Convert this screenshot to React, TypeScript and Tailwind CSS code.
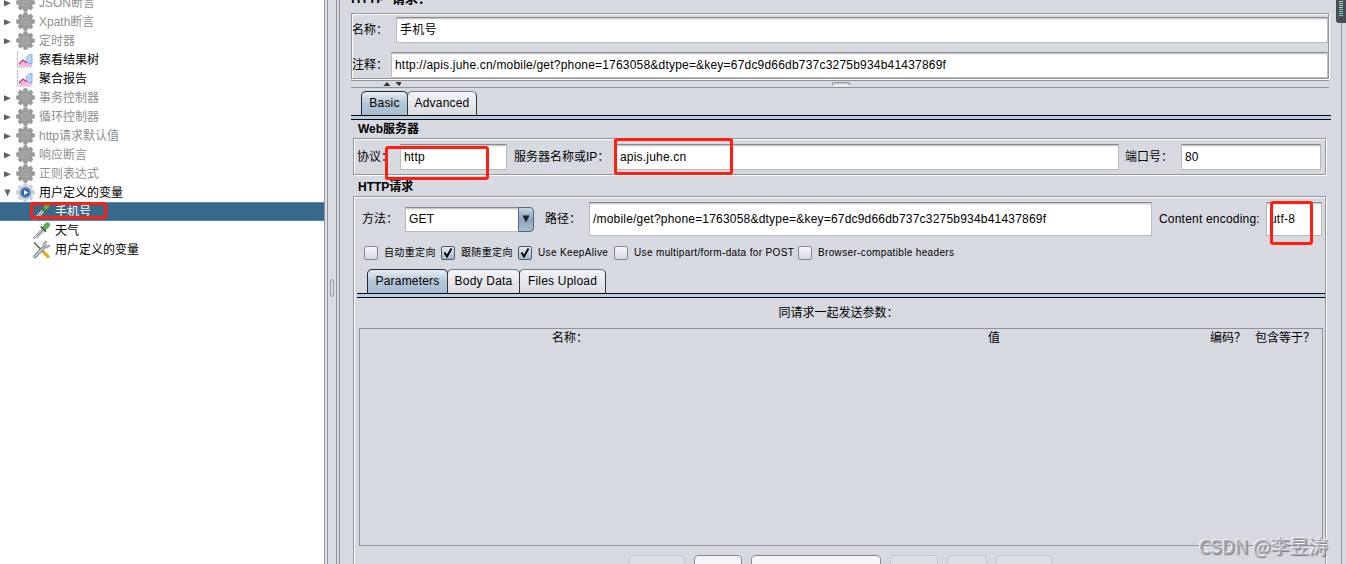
import React from "react";
import clsx from "clsx";

type IconKind = "gear" | "gearActive" | "chart" | "dropper" | "tools";

interface TreeItem {
  label: string;
  icon: IconKind;
  level: number;
  arrow?: "right" | "down";
  disabled?: boolean;
  selected?: boolean;
}

const treeItems: TreeItem[] = [
  { label: "JSON断言", icon: "gear", level: 0, arrow: "right", disabled: true },
  { label: "Xpath断言", icon: "gear", level: 0, arrow: "right", disabled: true },
  { label: "定时器", icon: "gear", level: 0, arrow: "right", disabled: true },
  { label: "察看结果树", icon: "chart", level: 0 },
  { label: "聚合报告", icon: "chart", level: 0 },
  { label: "事务控制器", icon: "gear", level: 0, arrow: "right", disabled: true },
  { label: "循环控制器", icon: "gear", level: 0, arrow: "right", disabled: true },
  { label: "http请求默认值", icon: "gear", level: 0, arrow: "right", disabled: true },
  { label: "响应断言", icon: "gear", level: 0, arrow: "right", disabled: true },
  { label: "正则表达式", icon: "gear", level: 0, arrow: "right", disabled: true },
  { label: "用户定义的变量", icon: "gearActive", level: 0, arrow: "down" },
  { label: "手机号", icon: "dropper", level: 1, selected: true },
  { label: "天气", icon: "dropper", level: 1 },
  { label: "用户定义的变量", icon: "tools", level: 1 },
];

const GearIcon = ({ active }: { active?: boolean }) => (
  <svg width="19" height="19" viewBox="0 0 19 19">
    {[0, 45, 90, 135].map((angle) => (
      <rect
        key={angle}
        x="7.3"
        y="0.2"
        width="4.4"
        height="18.6"
        rx="1.2"
        fill={active ? "#c9cdd3" : "#999999"}
        transform={`rotate(${angle} 9.5 9.5)`}
      />
    ))}
    <circle cx="9.5" cy="9.5" r="7.3" fill={active ? "#d5d8dc" : "#9d9d9d"} />
    {active ? (
      <>
        <circle cx="9.5" cy="9.5" r="5.4" fill="#5b86bd" stroke="#8d9bb0" strokeWidth="0.8" />
        <circle cx="9.5" cy="9.5" r="3.6" fill="#2f62a8" />
        <path d="M8 7l4.2 2.5L8 12z" fill="#fff" />
      </>
    ) : (
      <>
        <circle cx="9.5" cy="9.5" r="4.9" fill="#a9a9a9" stroke="#8f8f8f" strokeWidth="0.7" />
        <circle cx="9.5" cy="9.5" r="3" fill="#a0a0a0" />
      </>
    )}
  </svg>
);

const ChartIcon = () => (
  <svg width="19" height="19" viewBox="0 0 19 19">
    <path d="M1.5 1.5v15.5h15" fill="none" stroke="#a8a8a8" strokeWidth="1" strokeDasharray="2 1" />
    <path d="M3 16.5v-2.5l4-3.5 3 2 5-3 1 1v6z" fill="#f7b5e4" />
    <path d="M3 14l4-4 3 2.5 2.500-2" fill="none" stroke="#c9347b" strokeWidth="1.2" />
    <path d="M16 4.500v9c-3 .5-6-1-6-4 0-2.500 2.500-5.500 6-5z" fill="#b7d6f6" stroke="#78a5dc" strokeWidth="0.9" />
  </svg>
);

const DropperIcon = () => (
  <svg width="19" height="19" viewBox="0 0 19 19">
    <path d="M1.500 17.500c.5-2 1-2.500 2.500-3.500l6.500-7 2.500 2.500-7 6.500c-1.500 1-3 1-4.500 1.500z" fill="#d9dde0" stroke="#7f8688" strokeWidth="0.8" />
    <path d="M5 15l6-6" stroke="#6c7470" strokeWidth="1" />
    <path d="M9 5.500l5 5" stroke="#45624a" strokeWidth="2" />
    <path d="M11 6.500c1-2.500 3-5.500 5.500-4.500 2.500 1.500.5 4.500-3 6.500z" fill="#62ab55" stroke="#4a8746" strokeWidth="0.8" />
  </svg>
);

const ToolsIcon = () => (
  <svg width="19" height="19" viewBox="0 0 19 19">
    <path d="M2 2.500l7 7" stroke="#5d6265" strokeWidth="1.500" />
    <path d="M10.500 11l5.500 5.500" stroke="#e9a820" strokeWidth="3.200" strokeLinecap="round" />
    <path d="M3 16.500l9-9.500" stroke="#70777b" strokeWidth="3.400" strokeLinecap="round" />
    <path d="M3 16.500l9-9.500" stroke="#cdd1d4" strokeWidth="1.800" strokeLinecap="round" />
    <path d="M14.500 1.500c-2.500 0-4 2-3 4.500 1.500 2.500 4.500 2.500 6.500-.5l-3 .5-1.500-1.500z" fill="#c4c9cc" stroke="#777e82" strokeWidth="0.8" />
  </svg>
);

const TreeIcon = ({ kind }: { kind: IconKind }) => {
  if (kind === "chart") return <ChartIcon />;
  if (kind === "dropper") return <DropperIcon />;
  if (kind === "tools") return <ToolsIcon />;
  return <GearIcon active={kind === "gearActive"} />;
};

const TreeRow = ({ item }: { item: TreeItem }) => (
  <div
    className={clsx(
      "flex h-[19px] shrink-0 items-center",
      item.level === 1 ? "pl-8" : "pl-1",
      item.selected && "border-y border-[#5b8bb5] bg-[#39698a] text-white",
      item.disabled && "text-[#8e8f91]"
    )}
  >
    {item.level === 0 && (
      <div className="w-3">
        {item.arrow && (
          <svg width="8" height="8" viewBox="0 0 8 8" className="block">
            <path d={item.arrow === "right" ? "M0 1.200v6L7 4.200z" : "M0.500 0.500h6L3.500 7.500z"} fill="#5c5f63" />
          </svg>
        )}
      </div>
    )}
    <div className={item.level === 1 ? "w-[23px]" : "w-[23px]"}>
      <TreeIcon kind={item.icon} />
    </div>
    <span>{item.label}</span>
  </div>
);

const Field = ({ value, className }: { value: string; className?: string }) => (
  <div
    className={clsx(
      "flex items-center border border-[#b7babf] border-t-[#898b90] bg-white pl-[3px] tracking-[0.2px] shadow-[inset_0_1px_0_#c9cacc,inset_0_2px_0_#ededee]",
      className
    )}
  >
    {value}
  </div>
);

const Tab = ({ label, active, className }: { label: string; active?: boolean; className?: string }) => (
  <div
    className={clsx(
      "flex h-[24px] items-center justify-center rounded-t-[5px] border border-b-0 pb-px tracking-[0.2px]",
      active
        ? "border-[#1d2b3d] bg-linear-to-b from-[#e6edf3] via-[#b4c6d6] to-[#a5bdd0]"
        : "-ml-px border-[#33363e] border-t-[#777b83] bg-linear-to-b from-[#f3f4f6] to-[#d9dce2]",
      className
    )}
  >
    {label}
  </div>
);

const TabLine = () => <div className="h-[5px] border-y border-[#04060f] bg-[#b5cfdf]" />;

const CheckBox = ({ label, checked, className }: { label: string; checked?: boolean; className?: string }) => (
  <div className={clsx("flex items-center gap-[6px]", className)}>
    <div
      className={clsx(
        "h-[14px] w-[14px] shrink-0 rounded-[2px] border",
        checked
          ? "border-[#4b5b6b] bg-linear-to-b from-[#e3ebf2] to-[#a3b9cc]"
          : "border-[#84878e] bg-linear-to-b from-[#f7f8fa] to-[#d4d7dc]"
      )}
    >
      {checked && (
        <svg width="14" height="14" viewBox="0 0 14 14" className="relative -top-px -left-px">
          <path d="M3.500 6.500l2.500 4L10.500 2.500" fill="none" stroke="#000" strokeWidth="1.900" />
        </svg>
      )}
    </div>
    <span className="text-[10px] tracking-[0.35px] whitespace-nowrap">{label}</span>
  </div>
);

const etched = "border border-[#94969e] shadow-[1px_1px_0_#fff,inset_1px_1px_0_#fff]";

const SplitGrip = () => (
  <div className="flex w-[16px] shrink-0 border-x border-[#8f929b] bg-[#d6d9df]">
    <div className="w-[2px] bg-[#dee1e6]" />
    <div className="flex w-[10px] items-center justify-center border-x border-[#8f929b] bg-[#dadde1] pt-3">
      <div className="h-[18px] w-1 rounded-[2px] border border-[#999da4] bg-[#d6d9df]" />
    </div>
  </div>
);

const Marker = ({ className }: { className: string }) => (
  <div className={clsx("absolute rounded-[3px] border-3 border-[#ff1f12]", className)} />
);

const App = () => {
  return (
    <div className="relative flex h-[564px] w-[1346px] overflow-hidden bg-[#d6d9df] font-['Liberation_Sans','Noto_Sans_CJK_SC',sans-serif] text-[12px] leading-[14px] whitespace-nowrap text-black">
      {/* Test plan tree */}
      <div className="-mt-[7px] flex w-[324px] shrink-0 flex-col bg-white">
        {treeItems.map((item, i) => (
          <TreeRow key={i} item={item} />
        ))}
      </div>

      <SplitGrip />

      {/* Sampler editor */}
      <div className="flex w-[1002px] shrink-0 flex-col border-r border-[#8f98a4] pl-[11px]">
        <div className="flex h-[13px] items-end gap-[7px] text-[13px] leading-[15px] font-bold">
          <span className="-mb-[-7px]">HTTP</span>
          <span className="-mb-[-7px]">请求：</span>
        </div>

        <div className={clsx("flex h-[68px] w-[978px] flex-col pt-[3px]", etched)}>
          <div className="flex h-[26px] items-center">
            <span className="w-[44px]">名称：</span>
            <Field value="手机号" className="h-[26px] w-[932px]" />
          </div>
          <div className="mt-[9px] flex h-[26px] items-center">
            <span className="w-[39px]">注释：</span>
            <Field
              value="http://apis.juhe.cn/mobile/get?phone=1763058&dtype=&key=67dc9d66db737c3275b934b41437869f"
              className="h-[26px] w-[937px]"
            />
          </div>
        </div>

        <div className="mt-px flex h-[10px] w-[978px] items-center border-y border-[#8f929b] bg-[#d8dbdf]">
          <svg width="18" height="6" viewBox="0 0 18 6" className="ml-8">
            <path d="M0.500 5h7L4 1z" fill="#333" />
            <path d="M12.500 1h7L16 5z" fill="#333" />
          </svg>
          <div className="ml-[431px] h-1 w-[18px] rounded-t-[2px] border border-[#8f959d] border-b-white bg-[#d0d4d9]" />
        </div>

        <div className="mt-[3px] flex pl-[10px]">
          <Tab label="Basic" active className="w-[47px]" />
          <Tab label="Advanced" className="w-[70px]" />
        </div>
        <div className="w-[980px]">
          <TabLine />
        </div>

        <div className="flex w-[975px] grow flex-col pl-[2px]">
          <div className="flex h-[18px] items-center pl-[5px] font-bold">Web服务器</div>
          <div className={clsx("flex h-[37px] shrink-0 items-center", etched)}>
            <span className="w-[46px] pl-[3px]">协议：</span>
            <Field value="http" className="h-[26px] w-[107px]" />
            <span className="w-[109px] pl-[7px]">服务器名称或IP：</span>
            <Field value="apis.juhe.cn" className="h-[26px] w-[503px]" />
            <span className="w-[62px] pl-[6px]">端口号：</span>
            <Field value="80" className="h-[26px] w-[140px]" />
          </div>
          <div className="flex h-[21px] shrink-0 items-center pt-[3px] pl-[5px] font-bold">HTTP请求</div>

          <div className={clsx("flex h-[400px] shrink-0 flex-col", etched)}>
            <div className="mt-[5px] flex h-[34px] shrink-0 items-center">
              <span className="w-[51px] pl-2">方法：</span>
              <div className="flex h-[25px] w-[129px]">
                <Field value="GET" className="h-[25px] w-[113px] border-r-0" />
                <div className="flex w-4 items-center justify-center rounded-r-[4px] border border-[#55697b] bg-linear-to-b from-[#c6d5e1] via-[#8ba4ba] to-[#a9bdcd]">
                  <svg width="8" height="8" viewBox="0 0 8 8">
                    <path d="M0.500 0.500h7L4 7.500z" fill="#1c2229" />
                  </svg>
                </div>
              </div>
              <span className="w-[55px] pl-[11px]">路径：</span>
              <Field value="/mobile/get?phone=1763058&dtype=&key=67dc9d66db737c3275b934b41437869f" className="h-[34px] w-[563px]" />
              <span className="w-[114px] pl-[7px] tracking-[0.2px]">Content encoding:</span>
              <Field value="utf-8" className="h-[34px] w-[56px]" />
            </div>

            <div className="mt-[9px] flex h-[15px] shrink-0 items-center pl-[10px]">
              <CheckBox label="自动重定向" className="w-[77px]" />
              <CheckBox label="跟随重定向" checked className="w-[77px]" />
              <CheckBox label="Use KeepAlive" checked className="w-[96px]" />
              <CheckBox label="Use multipart/form-data for POST" className="w-[184px]" />
              <CheckBox label="Browser-compatible headers" />
            </div>

            <div className="mt-[9px] flex shrink-0 pl-[13px]">
              <Tab label="Parameters" active className="w-[81px]" />
              <Tab label="Body Data" className="w-[73px]" />
              <Tab label="Files Upload" className="w-[87px]" />
            </div>
            <div className="w-[971px] pl-[3px]">
              <TabLine />
            </div>

            <div className="flex h-[30px] shrink-0 items-center justify-center pr-0.5">同请求一起发送参数：</div>
            <div className="ml-[5px] flex h-[218px] w-[964px] shrink-0 border border-[#8f929b] pt-[2px]">
              <span className="w-[420px] text-center">名称：</span>
              <span className="w-[428px] text-center">值</span>
              <span className="w-[47px] pl-[2px]">编码？</span>
              <span>包含等于？</span>
            </div>

            <div className="mt-[9px] flex shrink-0 pl-[275px]">
              <div className="h-6 w-[56px] rounded-[4px] border border-[#c4c8ce] bg-[#dcdfe3]" />
              <div className="ml-[9px] h-6 w-[48px] rounded-[4px] border border-[#878b92] bg-[#f5f6f7]" />
              <div className="ml-[9px] h-6 w-[130px] rounded-[4px] border border-[#878b92] bg-[#f5f6f7]" />
              <div className="ml-[9px] h-6 w-[48px] rounded-[4px] border border-[#c4c8ce] bg-[#dcdfe3]" />
              <div className="ml-[9px] h-6 w-[40px] rounded-[4px] border border-[#c4c8ce] bg-[#dcdfe3]" />
              <div className="ml-[9px] h-6 w-[56px] rounded-[4px] border border-[#c4c8ce] bg-[#dcdfe3]" />
            </div>
          </div>
        </div>
      </div>

      {/* Memory gauge docked on the right edge */}
      <div className="absolute top-0 right-0 flex h-[23px] w-[10px] justify-center rounded-bl-[3px] bg-[#474c58] pt-px">
        <svg width="4" height="16" viewBox="0 0 4 16">
          {[0, 2, 4, 6, 8, 10, 12, 14].map((y) => (
            <rect key={y} x="0" y={y} width="4" height="1" fill={y < 7 ? "#a9dca0" : "#6fcfc6"} />
          ))}
        </svg>
      </div>

      {/* Highlights */}
      <Marker className="top-[202px] left-[30px] h-[17px] w-[77px]" />
      <Marker className="top-[146px] left-[385px] h-[34px] w-[104px]" />
      <Marker className="top-[138px] left-[614px] h-[37px] w-[119px]" />
      <Marker className="top-[201px] left-[1270px] h-[44px] w-[43px]" />

      <div className="absolute top-[534px] left-[1199px] font-['Noto_Sans_CJK_SC',sans-serif] text-[19px] leading-[24px] text-[#a9acb1] [text-shadow:-1px_-1px_0_#f3f4f6,1px_1px_1px_#777a80]">
        CSDN @李昱涛
      </div>
    </div>
  );
};

export default App;
